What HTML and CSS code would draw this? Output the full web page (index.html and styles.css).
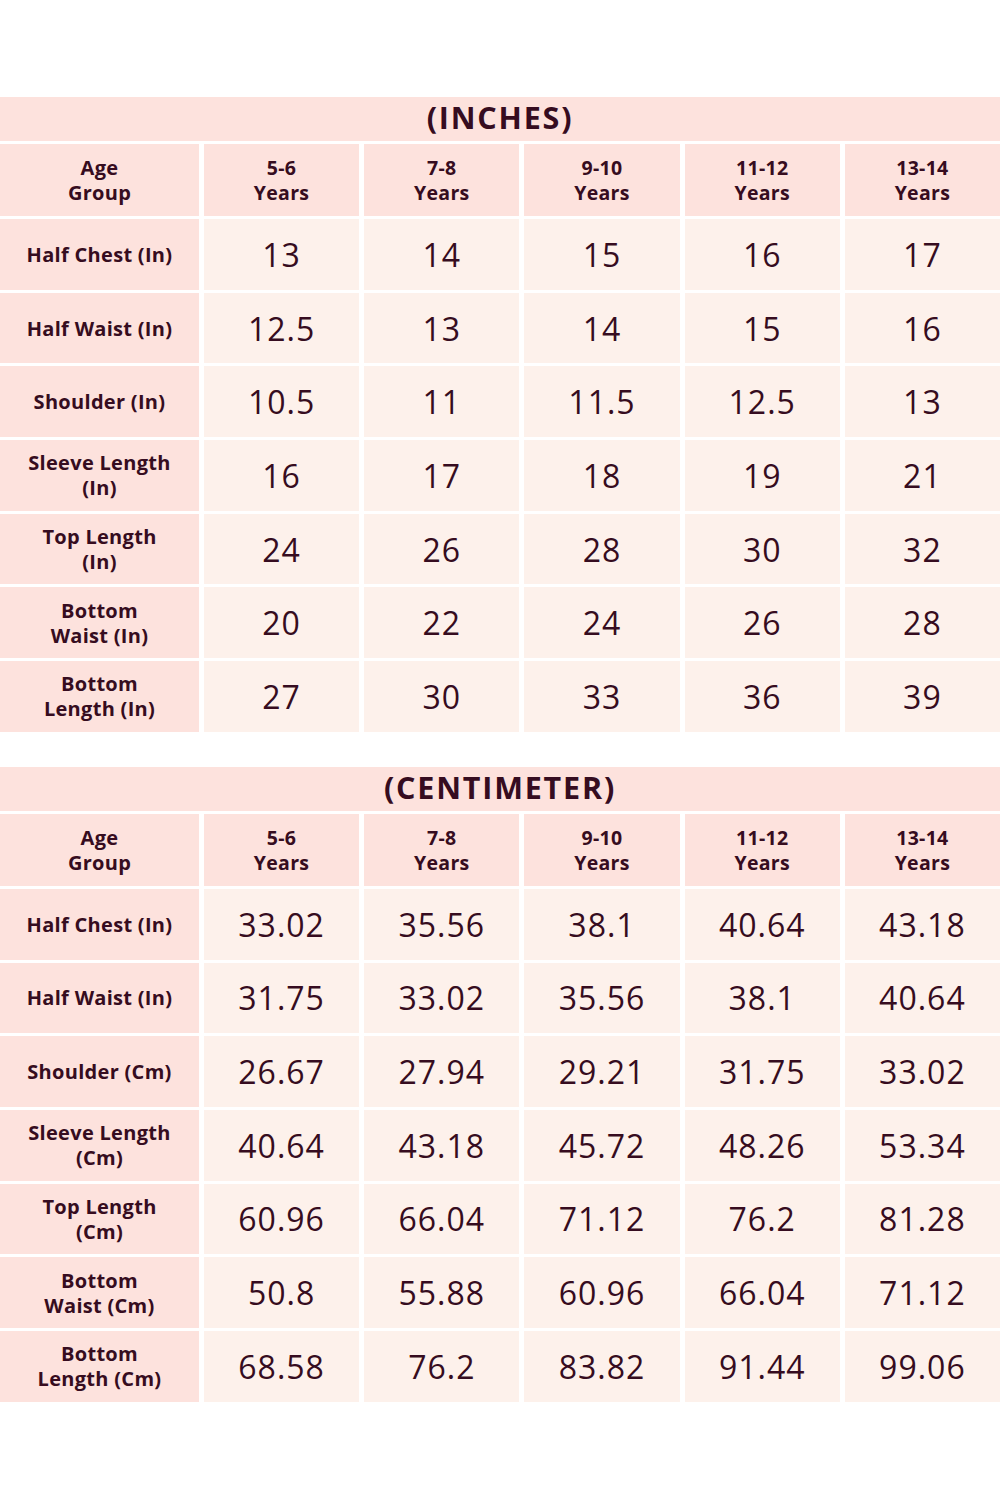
FILE: index.html
```html
<!DOCTYPE html>
<html lang="en">
<head>
<meta charset="utf-8">
<title>Size Chart</title>
<link rel="stylesheet" href="styles.css">
</head>
<body>
<main class="chart">
  <section class="size-table">
    <div class="title">(INCHES)</div>
    <div class="grid">
      <div class="cell head label">Age<br>Group</div>
      <div class="cell head">5-6<br>Years</div>
      <div class="cell head">7-8<br>Years</div>
      <div class="cell head">9-10<br>Years</div>
      <div class="cell head">11-12<br>Years</div>
      <div class="cell head">13-14<br>Years</div>

      <div class="cell label">Half Chest (In)</div>
      <div class="cell val">13</div><div class="cell val">14</div><div class="cell val">15</div><div class="cell val">16</div><div class="cell val">17</div>

      <div class="cell label">Half Waist (In)</div>
      <div class="cell val">12.5</div><div class="cell val">13</div><div class="cell val">14</div><div class="cell val">15</div><div class="cell val">16</div>

      <div class="cell label">Shoulder (In)</div>
      <div class="cell val">10.5</div><div class="cell val">11</div><div class="cell val">11.5</div><div class="cell val">12.5</div><div class="cell val">13</div>

      <div class="cell label">Sleeve Length<br>(In)</div>
      <div class="cell val">16</div><div class="cell val">17</div><div class="cell val">18</div><div class="cell val">19</div><div class="cell val">21</div>

      <div class="cell label">Top Length<br>(In)</div>
      <div class="cell val">24</div><div class="cell val">26</div><div class="cell val">28</div><div class="cell val">30</div><div class="cell val">32</div>

      <div class="cell label">Bottom<br>Waist (In)</div>
      <div class="cell val">20</div><div class="cell val">22</div><div class="cell val">24</div><div class="cell val">26</div><div class="cell val">28</div>

      <div class="cell label">Bottom<br>Length (In)</div>
      <div class="cell val">27</div><div class="cell val">30</div><div class="cell val">33</div><div class="cell val">36</div><div class="cell val">39</div>
    </div>
  </section>

  <section class="size-table second">
    <div class="title">(CENTIMETER)</div>
    <div class="grid">
      <div class="cell head label">Age<br>Group</div>
      <div class="cell head">5-6<br>Years</div>
      <div class="cell head">7-8<br>Years</div>
      <div class="cell head">9-10<br>Years</div>
      <div class="cell head">11-12<br>Years</div>
      <div class="cell head">13-14<br>Years</div>

      <div class="cell label">Half Chest (In)</div>
      <div class="cell val">33.02</div><div class="cell val">35.56</div><div class="cell val">38.1</div><div class="cell val">40.64</div><div class="cell val">43.18</div>

      <div class="cell label">Half Waist (In)</div>
      <div class="cell val">31.75</div><div class="cell val">33.02</div><div class="cell val">35.56</div><div class="cell val">38.1</div><div class="cell val">40.64</div>

      <div class="cell label">Shoulder (Cm)</div>
      <div class="cell val">26.67</div><div class="cell val">27.94</div><div class="cell val">29.21</div><div class="cell val">31.75</div><div class="cell val">33.02</div>

      <div class="cell label">Sleeve Length<br>(Cm)</div>
      <div class="cell val">40.64</div><div class="cell val">43.18</div><div class="cell val">45.72</div><div class="cell val">48.26</div><div class="cell val">53.34</div>

      <div class="cell label">Top Length<br>(Cm)</div>
      <div class="cell val">60.96</div><div class="cell val">66.04</div><div class="cell val">71.12</div><div class="cell val">76.2</div><div class="cell val">81.28</div>

      <div class="cell label">Bottom<br>Waist (Cm)</div>
      <div class="cell val">50.8</div><div class="cell val">55.88</div><div class="cell val">60.96</div><div class="cell val">66.04</div><div class="cell val">71.12</div>

      <div class="cell label">Bottom<br>Length (Cm)</div>
      <div class="cell val">68.58</div><div class="cell val">76.2</div><div class="cell val">83.82</div><div class="cell val">91.44</div><div class="cell val">99.06</div>
    </div>
  </section>
</main>
</body>
</html>
```

FILE: styles.css
```css
html, body {
  margin: 0;
  padding: 0;
  background: #ffffff;
}

body {
  font-family: "Open Sans", "Noto Sans", "Liberation Sans", sans-serif;
  color: #360c20;
}

.chart {
  padding-top: 97px;
  display: flex;
  flex-direction: column;
  gap: 35px;
}

.size-table {
  display: flex;
  flex-direction: column;
  gap: 3px;
}

.title {
  height: 44px;
  box-sizing: border-box;
  padding-bottom: 4px;
  background: #fde2dd;
  display: flex;
  align-items: center;
  justify-content: center;
  font-weight: 700;
  font-size: 30.5px;
  letter-spacing: 1.8px;
}

.grid {
  display: grid;
  grid-template-columns: 199px repeat(5, 1fr);
  grid-template-rows: 72px repeat(7, 70.7px);
  column-gap: 5px;
  row-gap: 3px;
}

.cell {
  display: flex;
  align-items: center;
  justify-content: center;
  text-align: center;
}

.head,
.label {
  background: #fde2dd;
  font-weight: 700;
  font-size: 19.5px;
  line-height: 25px;
  letter-spacing: 0.3px;
}

.label {
  font-size: 20px;
}

.val {
  background: #fdf1eb;
  font-size: 32px;
  font-weight: 400;
  letter-spacing: 1px;
}
```
